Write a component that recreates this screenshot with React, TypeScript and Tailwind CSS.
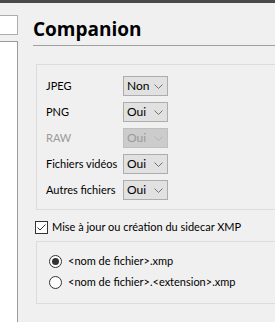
import React from "react";

const rows = [
  { label: "JPEG", value: "Non" },
  { label: "PNG", value: "Oui" },
  { label: "RAW", value: "Oui", disabled: true },
  { label: "Fichiers vidéos", value: "Oui" },
  { label: "Autres fichiers", value: "Oui" },
];

function Chevron({ disabled }: { disabled?: boolean }) {
  return (
    <svg width="9" height="5" viewBox="0 0 9 5" className="ml-auto mr-[4px]">
      <path d="M0.5 0.5 L4.5 4.5 L8.5 0.5" fill="none" stroke={disabled ? "#b4b4b4" : "#707070"} strokeWidth="1" />
    </svg>
  );
}

function Select({ value, disabled }: { value: string; disabled?: boolean }) {
  return (
    <div
      className={
        disabled
          ? "flex items-center w-[45px] h-[20px] pl-[3px] border border-[#bfbfbf] bg-[#cccccc] text-[#9a9a9a]"
          : "flex items-center w-[45px] h-[20px] pl-[3px] border border-[#adadad] bg-[#e1e1e1] text-black"
      }
    >
      <span className="text-[12px]">{value}</span>
      <Chevron disabled={disabled} />
    </div>
  );
}

export default function App() {
  return (
    <div className="w-[275px] h-[322px] overflow-hidden bg-[#f0f0f0] text-[11px] text-black font-['Lato',sans-serif] flex flex-col">
      <div className="h-[3px] bg-[#4a4a4a] shrink-0" />
      <div className="flex flex-1 min-h-0">
        {/* left panel */}
        <div className="w-[18px] shrink-0 flex flex-col pt-[12px]">
          <div className="h-[20px] bg-white border border-l-0 border-[#adadad]" />
          <div className="flex-1 mt-[6px] bg-white border-r border-t border-[#9b9b9b]" />
        </div>

        {/* settings */}
        <div className="flex-1 pl-[15px] pt-[14px] min-w-0">
          <h1 className="font-['Open_Sans',sans-serif] font-bold text-[19px] leading-[24px] pb-[4px] border-b border-[#a0a0a0]">
            Companion
          </h1>

          <div className="ml-[3px] mt-[18px] border border-r-0 border-[#dcdcdc] pl-[9px] pt-[11px] pb-[9px] flex flex-col gap-[6px]">
            {rows.map((r) => (
              <div key={r.label} className="flex items-center h-[20px]">
                <span className={r.disabled ? "w-[77px] whitespace-nowrap text-[#9a9a9a]" : "w-[77px] whitespace-nowrap"}>{r.label}</span>
                <Select value={r.value} disabled={r.disabled} />
              </div>
            ))}
          </div>

          <label className="flex items-center ml-[2px] mt-[10px] h-[14px]">
            <span className="w-[13px] h-[13px] border border-[#333333] bg-white flex items-center justify-center shrink-0">
              <svg width="11" height="11" viewBox="0 0 11 11">
                <path d="M1.5 5.5 L4 8 L9.5 2.5" fill="none" stroke="#333333" strokeWidth="1" />
              </svg>
            </span>
            <span className="ml-[4px] whitespace-nowrap">Mise à jour ou création du sidecar XMP</span>
          </label>

          <div className="ml-[3px] mt-[7px] border border-r-0 border-[#dcdcdc] pl-[12px] pt-[13px] pb-[14px] flex flex-col gap-[8px]">
            <div className="flex items-center h-[13px]">
              <span className="w-[13px] h-[13px] rounded-full border border-[#333333] bg-white flex items-center justify-center shrink-0">
                <span className="w-[7px] h-[7px] rounded-full bg-[#333333]" />
              </span>
              <span className="ml-[6px] whitespace-nowrap">&lt;nom de fichier&gt;.xmp</span>
            </div>
            <div className="flex items-center h-[13px]">
              <span className="w-[13px] h-[13px] rounded-full border border-[#333333] bg-white shrink-0" />
              <span className="ml-[6px] whitespace-nowrap">&lt;nom de fichier&gt;.&lt;extension&gt;.xmp</span>
            </div>
          </div>
        </div>
      </div>
    </div>
  );
}
